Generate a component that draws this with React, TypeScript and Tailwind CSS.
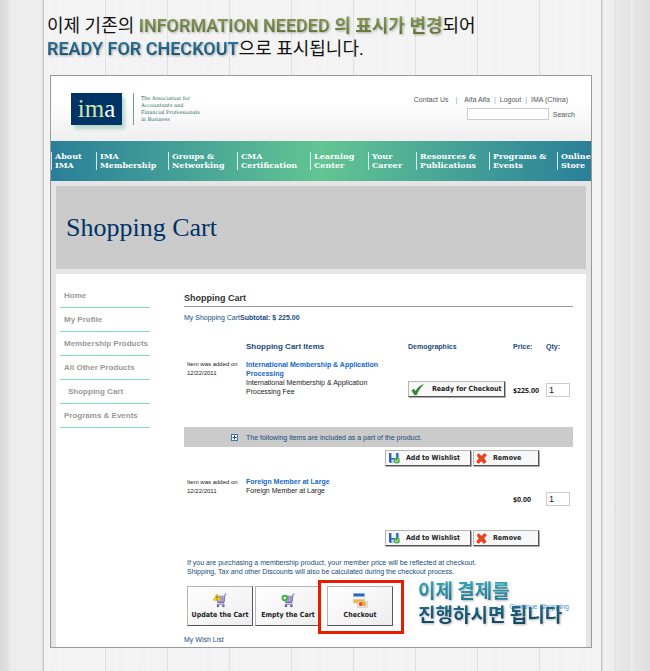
import type { ReactNode } from "react";

const sans = "font-['Liberation_Sans',Arial,sans-serif]";
const tahoma = "font-['DejaVu_Sans_Condensed',Tahoma,sans-serif]";
const priceFont = "font-['Open_Sans',Tahoma,sans-serif]";

const navItems = [
  ["About", "IMA"],
  ["IMA", "Membership"],
  ["Groups &", "Networking"],
  ["CMA", "Certification"],
  ["Learning", "Center"],
  ["Your", "Career"],
  ["Resources &", "Publications"],
  ["Programs &", "Events"],
  ["Online", "Store"],
];

const sideItems = [
  { label: "Home" },
  { label: "My Profile" },
  { label: "Membership Products" },
  { label: "All Other Products" },
  { label: "Shopping Cart", sub: true },
  { label: "Programs & Events" },
];

function CheckIcon() {
  return (
    <svg width="13" height="13" viewBox="0 0 13 13" className="shrink-0">
      <path d="M0.8 7.6 L3 6.2 L4.6 8.6 C6.2 5.4 8.6 3 12.2 1.6 C9.4 4.6 7.2 7.8 5.6 11.8 L3.6 12 Z" fill="#2f8a3c" stroke="#1d6a2a" strokeWidth="0.5" />
    </svg>
  );
}

function DiskIcon() {
  return (
    <svg width="12" height="12" viewBox="0 0 12 12" className="shrink-0">
      <path d="M1 1 H10.5 V11 H2.2 L1 9.8 Z" fill="#2a62c4" />
      <path d="M3.4 1 H8.2 V6 H3.4 Z" fill="#f4f8ff" />
      <path d="M3.4 7.4 H7.4 V11 H3.4 Z" fill="#b9cdf0" />
      <circle cx="8.8" cy="8.6" r="3" fill="#3fae43" />
      <path d="M7.2 8.6 L8.5 9.8 L10.4 7.4" fill="none" stroke="#fff" strokeWidth="1" />
    </svg>
  );
}

function CrossIcon() {
  return (
    <svg width="11" height="11" viewBox="0 0 11 11" className="shrink-0">
      <path d="M2.6 0.8 L5.6 3.2 L8.4 0.6 L10.4 2 L7.8 5.2 L10.2 8.8 L7.8 10.4 L5.2 7.8 L2.4 10.6 L0.6 8.8 L3 5.4 L1 2.2 Z" fill="#ee4423" stroke="#e2401f" strokeWidth="0.8" />
    </svg>
  );
}

function CartIcon({ kind }: { kind: "update" | "empty" }) {
  return (
    <svg width="14" height="15" viewBox="0 0 14 15">
      <path d="M13.4 1 L12 1.4 L11 9.5 H4.5" fill="none" stroke="#7a6aa8" strokeWidth="1" />
      <path d="M3 3.2 H11.6 L10.8 8.8 H4.2 Z" fill="#b9b2da" stroke="#7d72ae" strokeWidth="0.7" />
      <path d="M5.5 3.4 V8.6 M7.5 3.4 V8.6 M9.5 3.4 V8.6 M3.6 5.8 H11" stroke="#8a80bb" strokeWidth="0.6" />
      <path d="M4 11.2 H11.4" stroke="#8a80bb" strokeWidth="1.2" />
      <circle cx="5" cy="13" r="1.3" fill="#6b6490" />
      <circle cx="10.4" cy="13" r="1.3" fill="#6b6490" />
      {kind === "update" ? (
        <g>
          <path d="M4 0.8 L7.8 7.2 H0.2 Z" fill="#f7d31e" stroke="#c99a10" strokeWidth="0.5" />
          <path d="M4 3 V5.2 M4 5.8 V6.6" stroke="#4a3a00" strokeWidth="0.9" />
        </g>
      ) : (
        <circle cx="3.8" cy="5" r="2.3" fill="#fff" stroke="#45b34a" strokeWidth="2" />
      )}
    </svg>
  );
}

function CardIcon() {
  return (
    <svg width="15" height="15" viewBox="0 0 15 15">
      <rect x="0.5" y="0.5" width="11" height="10" fill="#f3f3f3" stroke="#ccc" strokeWidth="0.4" />
      <rect x="0.5" y="0.5" width="11" height="3" fill="#2467c8" />
      <rect x="0.5" y="6.4" width="11" height="3.4" fill="#f5b52c" />
      <rect x="4.4" y="8.4" width="10.2" height="6" fill="#e4dcd6" stroke="#bbb" strokeWidth="0.4" />
      <circle cx="7.8" cy="11" r="2" fill="#ea4a26" />
      <circle cx="10.8" cy="11" r="2" fill="#f6a02a" />
    </svg>
  );
}

function SmallButton({ icon, children, className }: { icon: ReactNode; children: ReactNode; className: string }) {
  return (
    <button
      type="button"
      className={`${tahoma} flex h-4 items-center border border-[#b5b5b5] border-r-[#555] border-b-[#555] bg-[#f8f8f8] pl-0.5 text-[7px] leading-[9px] font-bold whitespace-nowrap text-[#222] shadow-[1px_1px_0_#aaa] ${className}`}
    >
      {icon}
      {children}
    </button>
  );
}

function BigButton({ icon, children }: { icon: ReactNode; children: ReactNode }) {
  return (
    <button
      type="button"
      className={`${tahoma} flex h-10 w-[66px] flex-col items-center justify-center gap-[3px] border border-[#b5b5b5] border-r-[#555] border-b-[#555] bg-linear-to-br from-white to-[#ededed] text-[7px] leading-[9px] font-bold whitespace-nowrap text-[#222]`}
    >
      {icon}
      {children}
    </button>
  );
}

function ItemButtons() {
  return (
    <div className="flex justify-end gap-0.5 py-[3px] pr-[34px]">
      <SmallButton icon={<DiskIcon />} className="w-[86px] gap-[6px]">Add to Wishlist</SmallButton>
      <SmallButton icon={<CrossIcon />} className="w-[66px] gap-[6px]">Remove</SmallButton>
    </div>
  );
}

function Qty({ label }: { label: string }) {
  return (
    <input
      aria-label={label}
      defaultValue="1"
      className="block h-[14px] w-6 border border-[#ccc] bg-white pl-0.5 text-[9px] leading-3 text-[#222]"
    />
  );
}

export default function App() {
  return (
    <div className={`${sans} min-h-screen bg-[linear-gradient(90deg,#d9d9d9_0,#e2e2e2_8px,#ececec_11px,#eeeeee_42px,#c4c4c4_43px,#cccccc_44px,transparent_44px),linear-gradient(270deg,#e0e0e0_0,#e6e6e6_17px,#f2f2f2_18px,#e4e4e4_20px,#e9e9e9_34px,#dcdcdc_35px,#eeeeee_36px,#f1f1f1_47px,#c4c4c4_48px,#cccccc_49px,transparent_49px),repeating-linear-gradient(90deg,transparent_0,transparent_43px,#e0e0e0_43px,#e0e0e0_44px,transparent_44px,transparent_62px),repeating-linear-gradient(90deg,#f4f4f4_0,#f2f2f2_3px,#f5f5f5_5px,#f2f2f2_9px,#f4f4f4_11px)] pr-[58px] pb-[23px] pl-[50px]`}>
      <h1 className="-ml-[3px] pt-[14px] font-[Roboto,'Noto_Sans_CJK_KR',sans-serif] text-lg leading-[23px] font-normal whitespace-nowrap text-[#111]">
        이제 기존의{" "}
        <strong className="bg-linear-to-b from-[#8a9e55] to-[#5e7038] bg-clip-text font-semibold text-transparent drop-shadow-[1px_1px_1px_rgba(0,0,0,0.3)]">INFORMATION NEEDED 의 표시가 변경</strong>
        되어
        <br />
        <strong className="bg-linear-to-b from-[#2f7a9c] to-[#174f70] bg-clip-text font-semibold text-transparent drop-shadow-[1px_1px_1px_rgba(0,0,0,0.3)]">READY FOR CHECKOUT</strong>
        으로 표시됩니다.
      </h1>

      <div className="mt-[15px] border border-[#9a9a9a] bg-[#e5e5e5]">
        <header className="flex h-[65px] justify-between bg-linear-to-b from-white from-40% to-[#efefef] pr-4 pl-5">
          <div className="flex items-start pt-[17px]">
            <div className="h-8 w-[51px] bg-[#003366] pt-1 text-center font-['Liberation_Serif',Georgia,serif] text-[25px] leading-6 text-[#cdeaa8] shadow-[3px_4px_4px_#b9d6cb]">
              im<span className="text-white">a</span>
            </div>
            <p className="ml-[11px] h-8 border-l border-[#6a9c90] pt-0.5 pl-[7px] font-['DejaVu_Serif',Georgia,serif] text-[5px] leading-[7px] text-[#2f6b5c]">
              The Association for
              <br />
              Accountants and
              <br />
              Financial Professionals
              <br />
              in Business
            </p>
          </div>
          <div className="pt-[19px] text-[7px] leading-[9px] text-[#555]">
            <div className="flex gap-[7px] pr-[7px]">
              <a href="#contact">Contact Us</a>
              <span className="text-[#7aa6d6]">|</span>
              <a href="#account">Aifa Aifa</a>
              <span className="-mx-[3px] text-[#7aa6d6]">|</span>
              <a href="#logout">Logout</a>
              <span className="-mx-[3px] text-[#7aa6d6]">|</span>
              <a href="#china">IMA (China)</a>
            </div>
            <div className="mt-1 flex items-center justify-end gap-1">
              <input id="search" className="h-3 w-[82px] border border-[#ccc] bg-white" />
              <label htmlFor="search">Search</label>
            </div>
          </div>
        </header>

        <nav className="grid h-10 grid-cols-[45fr_72fr_69fr_73fr_58fr_48fr_73fr_68fr_34fr] items-center overflow-hidden bg-linear-to-r from-[#2a7f98] via-[#62c592] to-[#2a7f98] font-['DejaVu_Serif',Georgia,serif] text-[8px] leading-[9px] font-bold text-white">
          {navItems.map(([top, bottom]) => (
            <a key={top} href="#nav" className="min-w-0 border-l border-white/80 pl-[3px] whitespace-nowrap">
              {top}
              <br />
              {bottom}
            </a>
          ))}
        </nav>

        <div className="px-[5px] pt-[5px]">
          <div className="mb-[5px] flex h-[83px] items-center bg-[#cbcbcb] pl-[10px]">
            <h2 className="font-['Liberation_Serif',Georgia,serif] text-[26px] leading-8 text-[#003366]">Shopping Cart</h2>
          </div>

          <div className="flex bg-white pr-[13px] pl-1">
            <ul className="w-[90px] shrink-0 pt-[10px] text-[8px] leading-[9px] font-bold text-[#999]">
              {sideItems.map((item) => (
                <li key={item.label} className="border-b border-[#7be0b4]">
                  <a href="#side" className={item.sub ? "flex h-[23px] items-center pl-2 whitespace-nowrap" : "flex h-[23px] items-center pl-1 whitespace-nowrap"}>
                    {item.label}
                  </a>
                </li>
              ))}
            </ul>

            <main className="ml-[34px] min-w-0 flex-1 pt-[18px] pb-[3px] text-[7px] leading-[9px] text-[#174a7c]">
              <h3 className="h-[15px] border-b border-[#999] text-[9px] leading-3 font-bold text-[#333]">Shopping Cart</h3>
              <p className="mt-[6px]">
                My Shopping Cart<b>Subtotal: $ 225.00</b>
              </p>

              <table className="mt-[14px] w-full table-fixed border-collapse text-left">
                <thead>
                  <tr className="h-5">
                    <th className="w-[62px]"></th>
                    <th className="text-[8px]">Shopping Cart Items</th>
                    <th className="w-[105px]">Demographics</th>
                    <th className="w-[33px]">Price:</th>
                    <th className="w-[27px]">Qty:</th>
                  </tr>
                </thead>
                <tbody>
                  <tr className="h-[71px] align-top text-[#222]">
                    <td className="pt-1 pl-[3px] text-[6px] whitespace-nowrap">
                      Item was added on
                      <br />
                      12/22/2011
                    </td>
                    <td className="pt-1 pr-6">
                      <a href="#item" className="font-bold text-[#1668c7]">International Membership &amp; Application Processing</a>
                      <br />
                      International Membership &amp; Application Processing Fee
                    </td>
                    <td className="pt-[25px]">
                      <SmallButton icon={<CheckIcon />} className="w-[97px] gap-2">Ready for Checkout</SmallButton>
                    </td>
                    <td className={`${priceFont} pt-[30px] font-bold`}>$225.00</td>
                    <td className="pt-[27px]">
                      <Qty label="Membership quantity" />
                    </td>
                  </tr>
                  <tr className="h-5 bg-[#cbcbcb]">
                    <td colSpan={5}>
                      <div className="flex items-center gap-2 pl-[47px]">
                        <svg width="7" height="7" viewBox="0 0 7 7">
                          <rect x="0.5" y="0.5" width="6" height="6" fill="#fff" stroke="#3a78a8" />
                          <path d="M3.5 1.5 V5.5 M1.5 3.5 H5.5" stroke="#174a7c" />
                        </svg>
                        The following items are included as a part of the product.
                      </div>
                    </td>
                  </tr>
                  <tr>
                    <td colSpan={5}>
                      <ItemButtons />
                    </td>
                  </tr>
                  <tr className="h-[58px] align-top text-[#222]">
                    <td className="pt-[9px] pl-[3px] text-[6px] whitespace-nowrap">
                      Item was added on
                      <br />
                      12/22/2011
                    </td>
                    <td className="pt-2">
                      <a href="#item" className="font-bold text-[#1668c7]">Foreign Member at Large</a>
                      <br />
                      Foreign Member at Large
                    </td>
                    <td></td>
                    <td className={`${priceFont} pt-[26px] font-bold`}>$0.00</td>
                    <td className="pt-[23px]">
                      <Qty label="Foreign member quantity" />
                    </td>
                  </tr>
                  <tr>
                    <td colSpan={5}>
                      <ItemButtons />
                    </td>
                  </tr>
                </tbody>
              </table>

              <p className="mt-[9px] pl-[3px]">
                If you are purchasing a membership product, your member price will be reflected at checkout.
                <br />
                Shipping, Tax and other Discounts will also be calculated during the checkout process.
              </p>

              <div className="relative mt-[10px] flex items-center pl-[3px]">
                <BigButton icon={<CartIcon kind="update" />}>Update the Cart</BigButton>
                <div className="ml-0.5">
                  <BigButton icon={<CartIcon kind="empty" />}>Empty the Cart</BigButton>
                </div>
                <div className="relative ml-[6px]">
                  <BigButton icon={<CardIcon />}>Checkout</BigButton>
                  <span className="pointer-events-none absolute -top-[6px] -right-[11px] -bottom-2 -left-[9px] border-3 border-[#e81c00]"></span>
                </div>
                <a href="#shop" className="ml-auto pr-1 text-[#4a8fdc]">Continue Shopping</a>
                <p className="pointer-events-none absolute -top-2 left-[234px] bg-linear-to-b from-[#38b0bf] to-[#123f5e] bg-clip-text font-['Noto_Sans_CJK_KR',sans-serif] text-[19px] leading-6 font-bold whitespace-nowrap text-transparent drop-shadow-[1px_1px_1px_rgba(0,0,0,0.3)]">
                  이제 결제를
                  <br />
                  진행하시면 됩니다
                </p>
              </div>

              <a href="#wish" className="mt-[9px] block">My Wish List</a>
            </main>
          </div>
        </div>
      </div>
    </div>
  );
}
